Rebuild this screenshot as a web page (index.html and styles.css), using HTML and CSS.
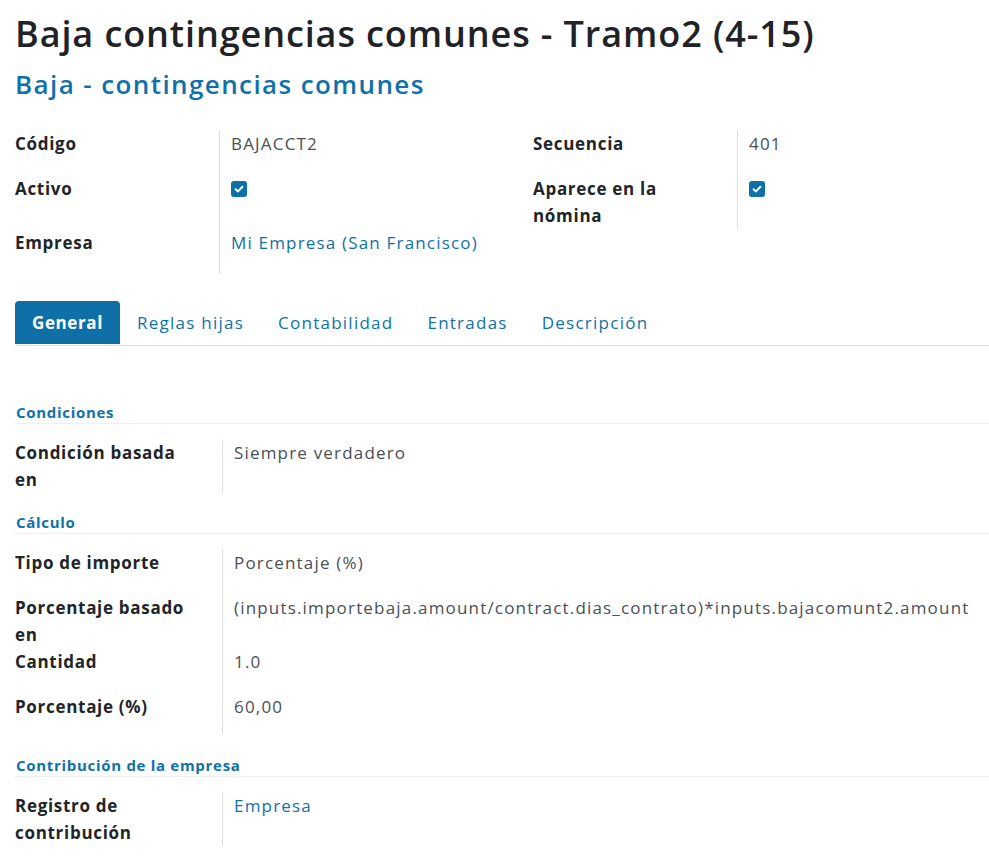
FILE: index.html
```html
<!DOCTYPE html>
<html lang="es">
<head>
<meta charset="utf-8">
<title>Baja contingencias comunes - Tramo2 (4-15)</title>
<link rel="stylesheet" href="styles.css">
</head>
<body>
<div class="sheet">
  <h1 class="title">Baja contingencias comunes - Tramo2 (4-15)</h1>
  <h2 class="subtitle">Baja - contingencias comunes</h2>

  <div class="topgrid">
    <div class="lbl">Código</div>
    <div class="val sep">BAJACCT2</div>
    <div class="lbl">Secuencia</div>
    <div class="val sep">401</div>

    <div class="lbl">Activo</div>
    <div class="val sep"><span class="check"><svg viewBox="0 0 16 16" width="16" height="16"><path d="M4.6 8.2 L7 10.4 L11.4 5.8" fill="none" stroke="#fff" stroke-width="2" stroke-linecap="round" stroke-linejoin="round"/></svg></span></div>
    <div class="lbl">Aparece en la<br>nómina</div>
    <div class="val sep"><span class="check"><svg viewBox="0 0 16 16" width="16" height="16"><path d="M4.6 8.2 L7 10.4 L11.4 5.8" fill="none" stroke="#fff" stroke-width="2" stroke-linecap="round" stroke-linejoin="round"/></svg></span></div>

    <div class="lbl">Empresa</div>
    <div class="val sep link">Mi Empresa (San Francisco)</div>
    <div></div>
    <div></div>
  </div>

  <div class="tabs">
    <div class="tab active">General</div>
    <div class="tab">Reglas hijas</div>
    <div class="tab">Contabilidad</div>
    <div class="tab">Entradas</div>
    <div class="tab">Descripción</div>
  </div>

  <div class="pane">
    <div class="section first">Condiciones</div>
    <div class="grid">
      <div class="lbl">Condición basada<br>en</div>
      <div class="val sep">Siempre verdadero</div>
    </div>

    <div class="section">Cálculo</div>
    <div class="grid">
      <div class="lbl">Tipo de importe</div>
      <div class="val sep">Porcentaje (%)</div>
      <div class="lbl">Porcentaje basado<br>en</div>
      <div class="val sep">(inputs.importebaja.amount/contract.dias_contrato)*inputs.bajacomunt2.amount</div>
      <div class="lbl">Cantidad</div>
      <div class="val sep">1.0</div>
      <div class="lbl">Porcentaje (%)</div>
      <div class="val sep short">60,00</div>
    </div>

    <div class="section tight">Contribución de la empresa</div>
    <div class="grid">
      <div class="lbl">Registro de<br>contribución</div>
      <div class="val sep link">Empresa</div>
    </div>
  </div>
</div>
</body>
</html>
```

FILE: styles.css
```css
html, body {
  margin: 0;
  padding: 0;
  background: #ffffff;
}

body {
  font-family: "Open Sans", "Noto Sans", sans-serif;
  color: #212529;
  font-size: 17px;
}

.sheet {
  padding: 12px 0 0 15px;
}

.title {
  margin: 0;
  font-size: 36px;
  line-height: 44px;
  font-weight: 600;
  letter-spacing: 0.9px;
  color: #1f2226;
}

.subtitle {
  margin: 11px 0 0 0;
  font-size: 26px;
  line-height: 34px;
  font-weight: 600;
  letter-spacing: 1.4px;
  color: #0f71a9;
}

.topgrid {
  display: grid;
  grid-template-columns: 204px 314px 204px 1fr;
  grid-auto-rows: minmax(45px, auto);
  margin-top: 29px;
}

.grid {
  display: grid;
  grid-template-columns: 207px 1fr;
  grid-auto-rows: minmax(45px, auto);
}

.lbl {
  font-weight: 700;
  line-height: 27px;
  letter-spacing: 0.7px;
  color: #212529;
}

.val {
  line-height: 27px;
  letter-spacing: 1.18px;
  color: #4a4f55;
  padding-left: 11px;
}

.val.short {
  height: 41px;
}

.sep {
  border-left: 1px solid #dcdfe3;
}

.link {
  color: #0f71a9;
}

.check {
  display: inline-block;
  width: 16px;
  height: 16px;
  margin-top: 6px;
  background: #0f6fa7;
  border-radius: 3px;
  vertical-align: top;
}

.check svg {
  display: block;
}

.tabs {
  display: flex;
  margin-top: 27px;
  border-bottom: 1px solid #dee2e6;
  height: 44px;
}

.tab {
  padding: 0 17px;
  line-height: 43px;
  height: 43px;
  color: #0f71a9;
  font-size: 17px;
  letter-spacing: 1.25px;
}

.tab.active {
  background: #0f6fa7;
  color: #ffffff;
  font-weight: 700;
  letter-spacing: 0.6px;
  border-radius: 4px 4px 0 0;
}

.pane {
  padding-top: 55px;
}

.section {
  font-size: 15px;
  font-weight: 700;
  color: #0f71a9;
  line-height: 22px;
  letter-spacing: 0.7px;
  padding-left: 1px;
  border-bottom: 1px solid #eef0f2;
  margin: 18px 0 15px 0;
}

.section.first {
  margin-top: 0;
}

.section.tight {
  margin-top: 16px;
}
```
